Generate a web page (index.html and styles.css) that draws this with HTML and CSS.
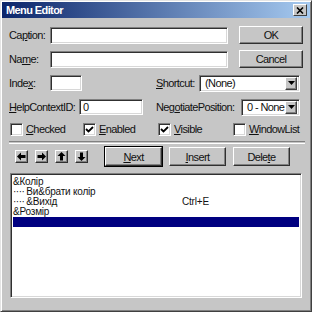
FILE: index.html
```html
<!DOCTYPE html>
<html lang="uk">
<head>
    <meta charset="UTF-8">
    <title>Menu Editor</title>
    <link rel="stylesheet" href="styles.css">
</head>
<body>

<div class="window">
    <div class="titlebar">
        <span class="title">Menu Editor</span>
        <span class="close-btn">
            <svg width="8" height="7" viewBox="0 0 8 7"><path d="M1 0.5 L7 6.5 M7 0.5 L1 6.5" stroke="#000" stroke-width="1.6"/></svg>
        </span>
    </div>

    <div class="content">
        <div class="row first">
            <span class="lbl w-41">Ca<u>p</u>tion:</span>
            <span class="edit w-caption"></span>
            <span class="btn btn-side">OK</span>
        </div>

        <div class="row">
            <span class="lbl w-41">Na<u>m</u>e:</span>
            <span class="edit w-caption"></span>
            <span class="btn btn-side">Cancel</span>
        </div>

        <div class="row">
            <span class="lbl w-41">Inde<u>x</u>:</span>
            <span class="edit w-index"></span>
            <span class="lbl w-shortcut"><u>S</u>hortcut:</span>
            <span class="combo w-combo1">
                <span class="combo-text">(None)</span>
                <span class="combo-btn"><svg width="7" height="4" viewBox="0 0 7 4"><polygon points="0,0 7,0 3.5,4" fill="#000"/></svg></span>
            </span>
        </div>

        <div class="row">
            <span class="lbl w-70"><u>H</u>elpContextID:</span>
            <span class="edit w-help"><span class="edit-text">0</span></span>
            <span class="lbl w-negotiate">Neg<u>o</u>tiatePosition:</span>
            <span class="combo w-combo2">
                <span class="combo-text">0 - None</span>
                <span class="combo-btn"><svg width="7" height="4" viewBox="0 0 7 4"><polygon points="0,0 7,0 3.5,4" fill="#000"/></svg></span>
            </span>
        </div>

        <div class="row checks">
            <span class="check w-73"><span class="box"></span><span><u>C</u>hecked</span></span>
            <span class="check w-75"><span class="box"><svg width="9" height="9" viewBox="0 0 9 9"><polyline points="1,4 3.5,6.5 8,2" fill="none" stroke="#000" stroke-width="1.8"/></svg></span><span><u>E</u>nabled</span></span>
            <span class="check w-75"><span class="box"><svg width="9" height="9" viewBox="0 0 9 9"><polyline points="1,4 3.5,6.5 8,2" fill="none" stroke="#000" stroke-width="1.8"/></svg></span><span><u>V</u>isible</span></span>
            <span class="check"><span class="box"></span><span><u>W</u>indowList</span></span>
        </div>

        <div class="separator"></div>

        <div class="toolbar">
            <span class="btn arrow"><svg width="9" height="9" viewBox="0 0 9 9"><polygon points="0,4.5 4,0.5 4,8.5" fill="#000"/><rect x="3.5" y="3" width="5" height="3" fill="#000"/></svg></span>
            <span class="btn arrow"><svg width="9" height="9" viewBox="0 0 9 9"><polygon points="9,4.5 5,0.5 5,8.5" fill="#000"/><rect x="0.5" y="3" width="5" height="3" fill="#000"/></svg></span>
            <span class="btn arrow"><svg width="9" height="9" viewBox="0 0 9 9"><polygon points="4.5,0 0.5,4 8.5,4" fill="#000"/><rect x="3" y="3.5" width="3" height="5" fill="#000"/></svg></span>
            <span class="btn arrow"><svg width="9" height="9" viewBox="0 0 9 9"><polygon points="4.5,9 0.5,5 8.5,5" fill="#000"/><rect x="3" y="0.5" width="3" height="5" fill="#000"/></svg></span>
            <span class="btn btn-wide default"><span><u>N</u>ext</span></span>
            <span class="btn btn-wide"><span><u>I</u>nsert</span></span>
            <span class="btn btn-wide"><span>Dele<u>t</u>e</span></span>
        </div>

        <div class="listbox">
            <div class="item">&amp;Колір</div>
            <div class="item"><span class="dots">····</span><span>Ви&amp;брати колір</span></div>
            <div class="item"><span class="item-caption"><span class="dots">····</span><span>&amp;Вихід</span></span><span>Ctrl+E</span></div>
            <div class="item">&amp;Розмір</div>
            <div class="item selected"></div>
        </div>
    </div>
</div>

</body>
</html>
```

FILE: styles.css
```css
body {
    margin: 0;
    background-color: #c6c6c6;
    font-family: "Liberation Sans", Arial, sans-serif;
    font-size: 11px;
    letter-spacing: -0.6px;
    color: #111;
}

u {
    text-decoration: underline;
    text-underline-offset: 1px;
}

.window {
    width: 312px;
    height: 312px;
    box-sizing: border-box;
    padding: 1px;
    border: 1px solid;
    border-color: #e4e4e4 #404040 #404040 #e4e4e4;
    box-shadow: inset 1px 1px #ffffff, inset -1px -1px #808080;
    background-color: #c6c6c6;
}

.titlebar {
    height: 16px;
    display: flex;
    align-items: center;
    justify-content: space-between;
    padding: 0 3px 0 4px;
    background: linear-gradient(to right, #0a246a, #a6caf0);
    color: #ffffff;
    font-weight: bold;
}

.close-btn {
    width: 14px;
    height: 12px;
    box-sizing: border-box;
    display: flex;
    align-items: center;
    justify-content: center;
    background-color: #c6c6c6;
    border: 1px solid;
    border-color: #ffffff #404040 #404040 #ffffff;
}

.content {
    padding-left: 7px;
}

.row {
    display: flex;
    align-items: center;
    height: 18px;
    margin-top: 6px;
}

.row.first {
    margin-top: 8px;
}

.lbl {
    flex: none;
    white-space: nowrap;
}

.w-41 { width: 41px; }
.w-70 { width: 70px; }
.w-shortcut { width: 43px; margin-left: 74px; }
.w-negotiate { width: 85px; margin-left: 13px; }

.edit, .combo, .listbox {
    box-sizing: border-box;
    background-color: #ffffff;
    border: 1px solid;
    border-color: #808080 #ffffff #ffffff #808080;
    box-shadow: inset 1px 1px #303030, inset -1px -1px #d8d8d8;
}

.edit {
    height: 17px;
    display: flex;
    align-items: center;
}

.w-caption { width: 178px; }
.w-index { width: 32px; height: 16px; }
.w-help { width: 64px; height: 16px; }

.edit-text, .combo-text {
    padding-left: 3px;
}

.combo {
    height: 17px;
    display: flex;
    align-items: center;
    justify-content: space-between;
    padding: 2px;
}

.w-combo1 { width: 101px; }
.w-combo2 { width: 59px; }

.combo-btn {
    width: 12px;
    height: 13px;
    box-sizing: border-box;
    display: flex;
    align-items: center;
    justify-content: center;
    background-color: #c6c6c6;
    border: 1px solid;
    border-color: #ffffff #404040 #404040 #ffffff;
    box-shadow: inset -1px -1px #808080;
}

.btn {
    box-sizing: border-box;
    display: flex;
    align-items: center;
    justify-content: center;
    background-color: #c6c6c6;
    border: 1px solid;
    border-color: #ffffff #303030 #303030 #ffffff;
    box-shadow: inset -1px -1px #808080;
    white-space: nowrap;
}

.btn-side {
    width: 64px;
    height: 18px;
    margin-left: 11px;
}

.checks {
    height: 14px;
    padding-left: 1px;
}

.check {
    display: flex;
    align-items: center;
    gap: 3px;
    flex: none;
}

.w-73 { width: 73px; }
.w-75 { width: 75px; }

.box {
    width: 13px;
    height: 13px;
    box-sizing: border-box;
    display: flex;
    align-items: center;
    justify-content: center;
    background-color: #ffffff;
    border: 1px solid;
    border-color: #808080 #ffffff #ffffff #808080;
    box-shadow: inset 1px 1px #303030, inset -1px -1px #d8d8d8;
}

.separator {
    width: 296px;
    height: 1px;
    margin-top: 5px;
    border-top: 1px solid #808080;
    border-bottom: 1px solid #ffffff;
}

.toolbar {
    display: flex;
    align-items: center;
    height: 19px;
    margin-top: 3px;
    padding-left: 6px;
}

.arrow {
    width: 13px;
    height: 13px;
    margin-right: 7px;
}

.btn-wide {
    width: 57px;
    height: 19px;
    margin-right: 7px;
}

.btn.default {
    margin-left: 10px;
    outline: 1px solid #000;
}

.listbox {
    width: 292px;
    height: 125px;
    margin-top: 7px;
    margin-left: 1px;
    padding: 3px 2px 2px 2px;
    font-size: 10px;
    letter-spacing: -0.2px;
}

.item {
    height: 10px;
    line-height: 10px;
    white-space: nowrap;
    display: flex;
}

.item-caption {
    display: flex;
    width: 169px;
}

.dots {
    letter-spacing: -0.5px;
    margin-right: 2px;
}

.item.selected {
    background-color: #000080;
}
```
